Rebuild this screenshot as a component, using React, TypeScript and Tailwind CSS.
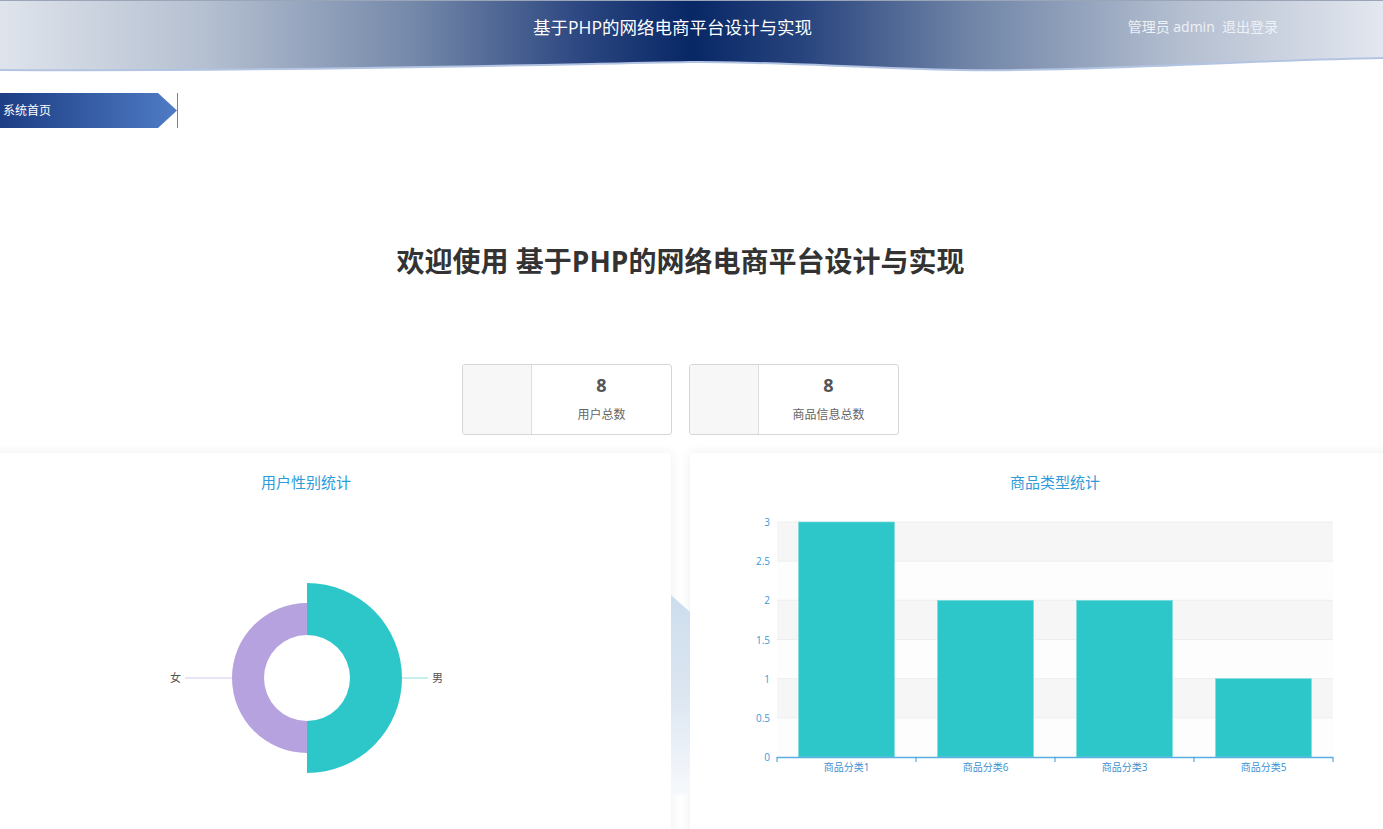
import React from 'react';

const yTicks = ['3', '2.5', '2', '1.5', '1', '0.5', '0'];
const bars = [
  { name: '商品分类1', value: 3 },
  { name: '商品分类6', value: 2 },
  { name: '商品分类3', value: 2 },
  { name: '商品分类5', value: 1 },
];

const SVG_FONT = "'Open Sans','Noto Sans CJK SC',sans-serif";

const Header: React.FC = () => (
  <div className="relative h-[74px] w-full">
    <svg className="absolute inset-0" width="1383" height="74" viewBox="0 0 1383 74">
      <defs>
        <linearGradient id="hdr" x1="0" y1="0" x2="1" y2="0">
          <stop offset="0" stopColor="#dfe4ec" />
          <stop offset="0.15" stopColor="#b4bfd0" />
          <stop offset="0.3" stopColor="#7488a9" />
          <stop offset="0.42" stopColor="#2c4781" />
          <stop offset="0.5" stopColor="#072765" />
          <stop offset="0.58" stopColor="#28447e" />
          <stop offset="0.7" stopColor="#6f84a7" />
          <stop offset="0.85" stopColor="#b2bdcf" />
          <stop offset="1" stopColor="#e3e7ef" />
        </linearGradient>
      </defs>
      <path
        d="M0,0 H1383 V58 C1250,60 1080,72 960,70 C860,68 760,61 690,62 C560,64 300,72 0,70 Z"
        fill="url(#hdr)"
      />
      <path
        d="M0,70 C300,72 560,64 690,62 C760,61 860,68 960,70 C1080,72 1250,60 1383,58"
        fill="none"
        stroke="#b3c4e2"
        strokeWidth="2"
      />
      <rect x="0" y="0" width="1383" height="1" fill="#9aa6b8" />
    </svg>
    <div className="relative flex h-[55px] items-center">
      <div className="flex-1 pl-[533px] text-[17.5px] text-white">基于PHP的网络电商平台设计与实现</div>
      <div className="mr-[105px] mb-[2px] text-[14px] text-[#eef1f7]">
        管理员 admin&nbsp;&nbsp;退出登录
      </div>
    </div>
  </div>
);

const StatCard: React.FC<{ value: number; label: string }> = ({ value, label }) => (
  <div className="flex h-[71px] w-[210px] overflow-hidden rounded-[3px] border border-[#d6d6d6] bg-white">
    <div className="w-[69px] border-r border-[#dedede] bg-[#f7f7f7]" />
    <div className="flex flex-1 flex-col items-center pt-[8px]">
      <div className="text-[18px] font-bold leading-[24px] text-[#555]">{value}</div>
      <div className="mt-[10px] text-[12px] leading-[16px] text-[#666]">{label}</div>
    </div>
  </div>
);

const GenderChart: React.FC = () => (
  <svg width="730" height="330" viewBox="0 0 730 330">
    <path d="M366,72 A95,95 0 0 1 366,262 L366,210 A43,43 0 0 0 366,124 Z" fill="#2ec7c9" />
    <path d="M366,242 A75,75 0 0 1 366,92 L366,124 A43,43 0 0 0 366,210 Z" fill="#b6a2de" />
    <line x1="244" y1="167" x2="291" y2="167" stroke="#d3c8ee" strokeWidth="1" />
    <line x1="461" y1="167" x2="487" y2="167" stroke="#8edede" strokeWidth="1" />
    <text x="240" y="171" textAnchor="end" fontSize="11" fill="#555" fontFamily={SVG_FONT}>女</text>
    <text x="491" y="171" fontSize="11" fill="#555" fontFamily={SVG_FONT}>男</text>
  </svg>
);

const TypeChart: React.FC = () => {
  const left = 87;
  const right = 643;
  const top = 11;
  const bottom = 246;
  const band = (bottom - top) / 6;
  const cat = (right - left) / bars.length;
  const yOf = (v: number) => bottom - (v / 3) * (bottom - top);
  return (
    <svg width="730" height="330" viewBox="0 0 730 330">
      {[0, 1, 2, 3, 4, 5].map(i => (
        <rect
          key={i}
          x={left}
          y={top + i * band}
          width={right - left}
          height={band}
          fill={i % 2 === 0 ? '#f6f6f6' : '#fdfdfd'}
        />
      ))}
      {[0, 1, 2, 3, 4, 5].map(i => (
        <line key={i} x1={left} x2={right} y1={top + i * band} y2={top + i * band} stroke="#eeeeee" />
      ))}
      {yTicks.map((t, i) => (
        <text
          key={t}
          x={left - 7}
          y={top + i * band + 4}
          textAnchor="end"
          fontSize="10"
          fill="#3b98d6"
          fontFamily={SVG_FONT}
        >
          {t}
        </text>
      ))}
      {bars.map((b, i) => (
        <rect
          key={b.name}
          x={left + i * cat + 21.5}
          y={yOf(b.value)}
          width={96}
          height={bottom - yOf(b.value)}
          fill="#2ec7c9"
          stroke="#7fdcdd"
          strokeWidth="0.6"
        />
      ))}
      <line x1={left} x2={right} y1={bottom + 0.5} y2={bottom + 0.5} stroke="#5aaee2" strokeWidth="1.5" />
      {[0, 1, 2, 3, 4].map(i => (
        <line
          key={i}
          x1={left + i * cat}
          x2={left + i * cat}
          y1={bottom}
          y2={bottom + 5}
          stroke="#3b98d6"
          strokeWidth="1"
        />
      ))}
      {bars.map((b, i) => (
        <text
          key={b.name}
          x={left + i * cat + cat / 2}
          y={bottom + 14}
          textAnchor="middle"
          fontSize="10"
          fill="#3b8fd0"
          fontFamily={SVG_FONT}
        >
          {b.name}
        </text>
      ))}
    </svg>
  );
};

const ChartCard: React.FC<{ title: string; children: React.ReactNode }> = ({ title, children }) => (
  <div className="h-[420px] w-[730px] shrink-0 rounded-[4px] bg-white shadow-[0_0_12px_rgba(40,50,80,0.08)]">
    <div className="h-[58px] pt-[19px] text-center text-[15px] leading-[20px] text-[#2f9bd8]">{title}</div>
    {children}
  </div>
);

export default function App() {
  return (
    <div className="h-[829px] w-[1383px] overflow-hidden bg-white font-['Open_Sans','Noto_Sans_CJK_SC',sans-serif]">
      <Header />

      <div className="mt-[19px] flex h-[35px] items-stretch">
        <div className="flex w-[177px] items-center bg-linear-to-r from-[#1d3d84] to-[#4f7cc6] pl-[3px] text-[12px] text-white [clip-path:polygon(0_0,158px_0,177px_50%,158px_100%,0_100%)]">
          系统首页
        </div>
        <div className="w-px bg-[#5b85d0]" />
      </div>

      <h1 className="mt-[113px] text-center text-[28px] font-bold leading-[40px] text-[#333] pr-[22px]">
        欢迎使用 基于PHP的网络电商平台设计与实现
      </h1>

      <div className="mt-[83px] flex justify-center gap-[17px] pr-[22px]">
        <StatCard value={8} label="用户总数" />
        <StatCard value={8} label="商品信息总数" />
      </div>

      <div className="mt-[18px] ml-[-59px] flex">
        <ChartCard title="用户性别统计">
          <GenderChart />
        </ChartCard>
        <div className="w-[19px] shrink-0 pt-[142px]">
          <div className="h-[200px] bg-linear-to-b from-[#cddded] via-[#dce6f1] to-[#f7f9fc] [clip-path:polygon(0_0,100%_17px,100%_100%,0_100%)]" />
        </div>
        <ChartCard title="商品类型统计">
          <TypeChart />
        </ChartCard>
      </div>
    </div>
  );
}
